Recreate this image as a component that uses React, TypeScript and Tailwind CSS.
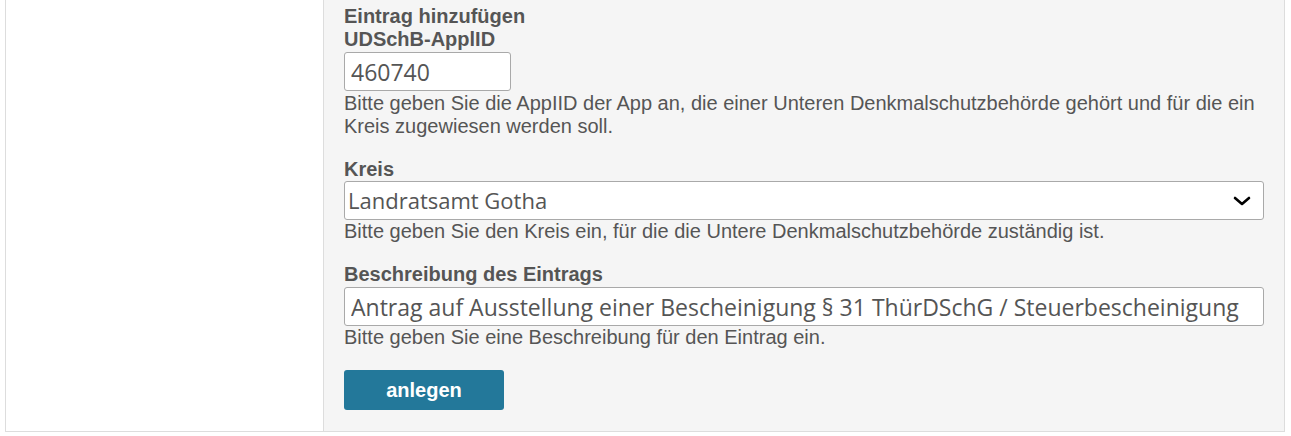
export default function App() {
  const label = 'block font-bold text-[20px] leading-[23px] text-[#555]';
  const help = 'text-[20px] leading-[23px] text-[#555]';
  const field =
    'h-[39px] bg-white border border-[#a9a9a9] rounded-[3px] text-[#555] font-["Open_Sans",sans-serif] outline-none';

  return (
    <div className='font-["Liberation_Sans",Arial,sans-serif] bg-white'>
      <div className="ml-[5px] w-[1280px] flex border-x border-b border-[#ddd]">
        <div className="w-[318px] bg-white border-r border-[#ddd]" />
        <div className="flex-1 bg-[#f5f5f5] px-5 pt-[5px] pb-[21px]">
          <div className={label}>Eintrag hinzufügen</div>

          <div className="mb-[20px]">
            <label className={label}>UDSchB-ApplID</label>
            <input
              type="text"
              defaultValue="460740"
              className={`${field} mt-px w-[167px] px-[6px] text-[23px]`}
            />
            <p className={`${help} mt-px`}>
              Bitte geben Sie die AppIID der App an, die einer Unteren Denkmalschutzbehörde gehört und für die ein
              Kreis zugewiesen werden soll.
            </p>
          </div>

          <div className="mb-[20px]">
            <label className={label}>Kreis</label>
            <div className={`${field} w-full flex items-center justify-between pl-[3px] pr-[12px] text-[22px]`}>
              <span>Landratsamt Gotha</span>
              <svg width="18" height="10" viewBox="0 0 18 10" fill="none">
                <path d="M2 2l7 6 7-6" stroke="#000" strokeWidth="2.6" strokeLinecap="round" strokeLinejoin="round" />
              </svg>
            </div>
            <p className={help}>
              Bitte geben Sie den Kreis ein, für die die Untere Denkmalschutzbehörde zuständig ist.
            </p>
          </div>

          <div className="mb-[20px]">
            <label className={label}>Beschreibung des Eintrags</label>
            <input
              type="text"
              defaultValue="Antrag auf Ausstellung einer Bescheinigung § 31 ThürDSchG / Steuerbescheinigung"
              className={`${field} mt-px w-full px-[6px] text-[23px]`}
            />
            <p className={help}>Bitte geben Sie eine Beschreibung für den Eintrag ein.</p>
          </div>

          <button
            type="button"
            className="mt-px w-[160px] h-[40px] rounded-[3px] bg-[#23789a] text-white font-bold text-[20px]"
          >
            anlegen
          </button>
        </div>
      </div>
    </div>
  );
}
